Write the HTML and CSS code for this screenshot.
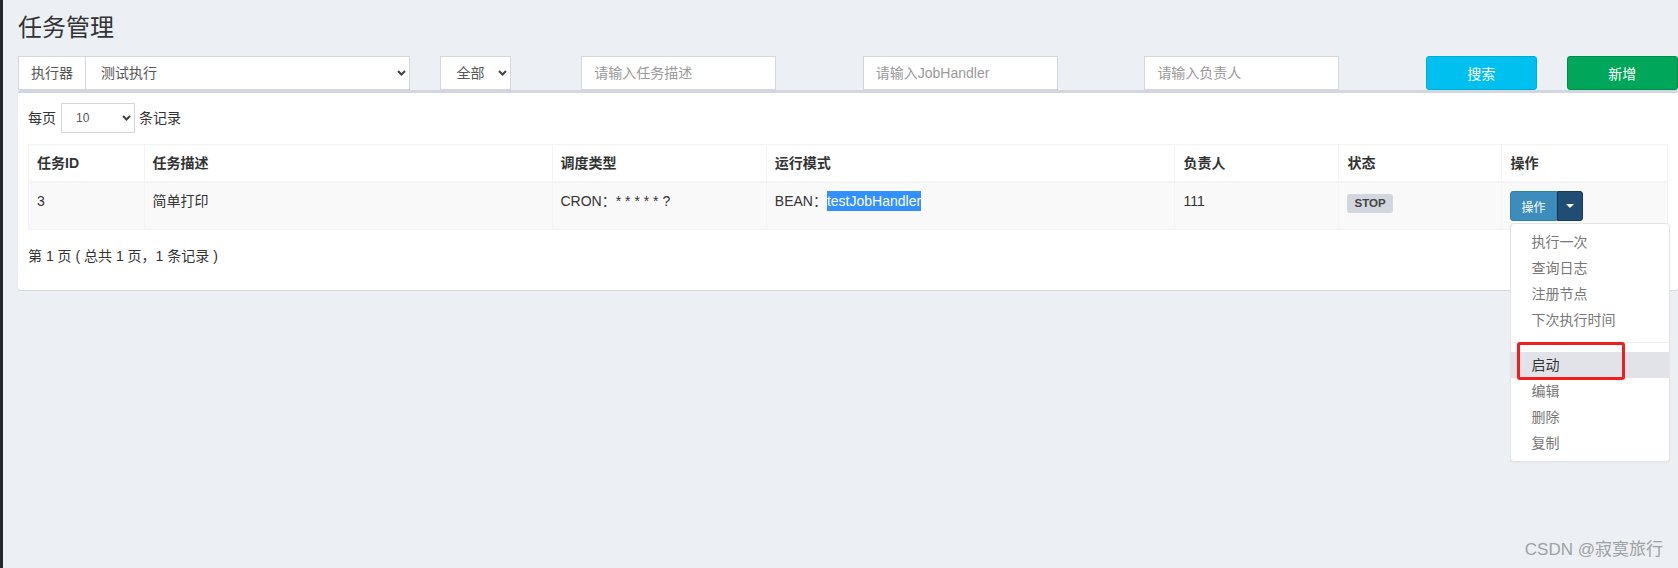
FILE: index.html
```html
<!DOCTYPE html>
<html lang="zh-CN">
<head>
<meta charset="utf-8">
<title>任务管理</title>
<link rel="stylesheet" href="styles.css">
</head>
<body>
<div class="app">
  <div class="sidebar-edge"></div>
  <div class="content-wrapper">
    <section class="content-header">
      <h1>任务管理</h1>
    </section>
    <section class="content">
      <div class="filter-row">
        <div class="col col-3">
          <div class="input-group">
            <span class="addon">执行器</span>
            <div class="select-wrap grow">
              <select class="form-control sel-main"><option>测试执行</option></select>
              <svg class="chev" width="9" height="6" viewBox="0 0 9 6"><path d="M1 1 L4.5 4.5 L8 1" fill="none" stroke="#444" stroke-width="2"/></svg>
            </div>
          </div>
        </div>
        <div class="col col-1">
          <div class="select-wrap status">
            <select class="form-control sel-main"><option>全部</option></select>
            <svg class="chev" width="9" height="6" viewBox="0 0 9 6"><path d="M1 1 L4.5 4.5 L8 1" fill="none" stroke="#444" stroke-width="2"/></svg>
          </div>
        </div>
        <div class="col col-2"><input class="form-control text-input" type="text" placeholder="请输入任务描述"></div>
        <div class="col col-2"><input class="form-control text-input" type="text" placeholder="请输入JobHandler"></div>
        <div class="col col-2"><input class="form-control text-input" type="text" placeholder="请输入负责人"></div>
        <div class="col col-1"><button class="btn btn-info" type="button">搜索</button></div>
        <div class="col col-1"><button class="btn btn-success" type="button">新增</button></div>
      </div>

      <div class="box">
        <div class="box-body">
          <div class="length">
            <span>每页</span>
            <div class="select-wrap small">
              <select class="form-control sel-small"><option>10</option></select>
              <svg class="chev" width="9" height="6" viewBox="0 0 9 6"><path d="M1 1 L4.5 4.5 L8 1" fill="none" stroke="#444" stroke-width="2"/></svg>
            </div>
            <span>条记录</span>
          </div>

          <table class="job-table">
            <colgroup>
              <col class="w-id"><col class="w-desc"><col class="w-type"><col class="w-mode"><col class="w-author"><col class="w-status"><col class="w-op">
            </colgroup>
            <thead>
              <tr><th>任务ID</th><th>任务描述</th><th>调度类型</th><th>运行模式</th><th>负责人</th><th>状态</th><th>操作</th></tr>
            </thead>
            <tbody>
              <tr>
                <td>3</td>
                <td>简单打印</td>
                <td>CRON：* * * * * ?</td>
                <td>BEAN：<span class="selected">testJobHandler</span></td>
                <td>111</td>
                <td><span class="label">STOP</span></td>
                <td>
                  <div class="btn-group">
                    <button class="btn-op" type="button">操作</button>
                    <button class="btn-toggle" type="button"><span class="caret"></span></button>
                    <ul class="dropdown-menu">
                      <li><a>执行一次</a></li>
                      <li><a>查询日志</a></li>
                      <li><a>注册节点</a></li>
                      <li><a>下次执行时间</a></li>
                      <li class="divider"></li>
                      <li class="active"><a>启动</a></li>
                      <li><a>编辑</a></li>
                      <li><a>删除</a></li>
                      <li><a>复制</a></li>
                      <div class="annot"></div>
                    </ul>
                  </div>
                </td>
              </tr>
            </tbody>
          </table>

          <div class="info">第 1 页 ( 总共 1 页，1 条记录 )</div>
        </div>
      </div>
    </section>
  </div>
</div>
<div class="watermark">CSDN @寂寞旅行</div>
</body>
</html>
```

FILE: styles.css
```css
html, body {
  margin: 0;
  padding: 0;
  overflow: hidden;
  height: 568px;
}
body {
  font-family: "Liberation Sans", "Noto Sans CJK SC", sans-serif;
  font-size: 14px;
  color: #333;
  background: #ecf0f5;
  position: relative;
}
.app {
  display: flex;
  min-height: 568px;
}
.sidebar-edge {
  width: 3px;
  flex: none;
  background: #23282c;
}
.content-wrapper {
  flex: 1;
  min-width: 0;
}
.content-header {
  padding: 15px 0 0 15px;
}
.content-header h1 {
  margin: 0;
  font-size: 24px;
  line-height: 26px;
  font-weight: 400;
  color: #333;
}
.content {
  padding: 15px 0 0 15px;
}
.filter-row {
  display: flex;
  margin-left: -15px;
  width: 1689.6px;
}
.col {
  flex: none;
  box-sizing: border-box;
  padding: 0 15px;
}
.col-3 { width: 422.4px; }
.col-2 { width: 281.6px; }
.col-1 { width: 140.8px; }

.input-group {
  display: flex;
  height: 34px;
}
.addon {
  box-sizing: border-box;
  height: 34px;
  padding: 0 12px;
  line-height: 32px;
  border: 1px solid #d2d6de;
  border-right: none;
  background: #fff;
  color: #555;
  white-space: nowrap;
}
.select-wrap {
  position: relative;
}
.select-wrap.grow { flex: 1; }
.select-wrap.status { width: 71px; }
.select-wrap.small { width: 74px; margin: 0 4px 0 5px; }
.form-control {
  box-sizing: border-box;
  display: block;
  width: 100%;
  border: 1px solid #d2d6de;
  border-radius: 0;
  background: #fff;
  color: #555;
  font-family: "Liberation Sans", "Noto Sans CJK SC", sans-serif;
  margin: 0;
  outline: none;
}
select.form-control {
  -webkit-appearance: none;
  appearance: none;
}
.sel-main {
  height: 34px;
  font-size: 14px;
  padding: 0 24px 0 15px;
}
.sel-small {
  height: 30px;
  font-size: 12px;
  padding: 0 20px 0 14px;
}
.chev {
  position: absolute;
  right: 4px;
  top: 50%;
  margin-top: -3px;
  pointer-events: none;
}
.text-input {
  width: 195px;
  height: 34px;
  font-size: 14px;
  padding: 0 12px;
}
.text-input::placeholder {
  color: #999;
}
.btn {
  display: block;
  width: 100%;
  height: 34px;
  border-radius: 3px;
  color: #fff;
  font-size: 14px;
  font-family: "Liberation Sans", "Noto Sans CJK SC", sans-serif;
  padding: 0;
  cursor: pointer;
}
.btn-info {
  background: #00c0ef;
  border: 1px solid #00acd6;
}
.btn-success {
  background: #00a65a;
  border: 1px solid #008d4c;
}

.box {
  background: #fff;
  border-top: 3px solid #d2d6de;
  border-radius: 3px;
  box-shadow: 0 1px 1px rgba(0, 0, 0, 0.1);
}
.box-body {
  padding: 10px;
}
.length {
  display: flex;
  align-items: center;
  height: 30px;
  line-height: 20px;
}
.job-table {
  margin-top: 11px;
  width: 100%;
  border-collapse: collapse;
  table-layout: fixed;
  border: 1px solid #f4f4f4;
}
.w-id { width: 115.5px; }
.w-desc { width: 408px; }
.w-type { width: 214.3px; }
.w-mode { width: 408.7px; }
.w-author { width: 164px; }
.w-status { width: 163px; }
.job-table th,
.job-table td {
  padding: 8px;
  line-height: 20px;
  text-align: left;
  vertical-align: top;
  border: 1px solid #f4f4f4;
  font-size: 14px;
  color: #333;
  white-space: nowrap;
}
.job-table th {
  font-weight: 700;
  border-bottom: 2px solid #f4f4f4;
}
.job-table tbody tr {
  background: #f9f9f9;
}
.selected {
  display: inline-block;
  background: #3390ff;
  color: #fff;
  line-height: 20px;
}
.label {
  display: inline-block;
  vertical-align: top;
  margin-top: 3px;
  padding: 3px 7px;
  font-size: 11.5px;
  line-height: 13px;
  font-weight: 700;
  color: #444;
  background: #d2d6de;
  border-radius: 3px;
}
.btn-group {
  position: relative;
  display: inline-flex;
  vertical-align: top;
}
.btn-op {
  height: 30px;
  padding: 0 10px;
  font-size: 12px;
  font-family: "Liberation Sans", "Noto Sans CJK SC", sans-serif;
  color: #fff;
  background: #3c8dbc;
  border: 1px solid #367fa9;
  border-radius: 3px 0 0 3px;
}
.btn-toggle {
  width: 26px;
  height: 30px;
  padding: 0;
  background: #204d74;
  border: 1px solid #173a58;
  border-radius: 0 3px 3px 0;
  display: flex;
  align-items: center;
  justify-content: center;
}
.caret {
  width: 0;
  height: 0;
  border-top: 4px solid #fff;
  border-left: 4px solid transparent;
  border-right: 4px solid transparent;
}
.dropdown-menu {
  position: absolute;
  top: 100%;
  left: 0;
  margin: 2px 0 0;
  padding: 5px 0;
  width: 158px;
  list-style: none;
  background: #fff;
  border: 1px solid #e4e4e4;
  border-radius: 4px;
  box-shadow: 0 1px 2px rgba(0, 0, 0, 0.04);
  z-index: 10;
}
.dropdown-menu li a {
  display: block;
  padding: 3px 20px;
  line-height: 20px;
  font-size: 14px;
  color: #777;
  white-space: nowrap;
}
.dropdown-menu li.active a {
  background: #e1e3e9;
  color: #333;
}
.dropdown-menu .divider {
  height: 1px;
  margin: 9px 0;
  background: #eee;
}
.annot {
  position: absolute;
  left: 6px;
  top: 118px;
  width: 108px;
  height: 38px;
  box-sizing: border-box;
  border: 3px solid #f41d1d;
  border-radius: 3px;
}
.info {
  margin-top: 16px;
  padding-bottom: 14px;
  line-height: 20px;
  color: #333;
}
.watermark {
  position: absolute;
  right: 15px;
  top: 538px;
  font-size: 17px;
  line-height: 24px;
  color: #a0a0a0;
  font-family: "Liberation Sans", "Noto Sans CJK SC", sans-serif;
}
```
